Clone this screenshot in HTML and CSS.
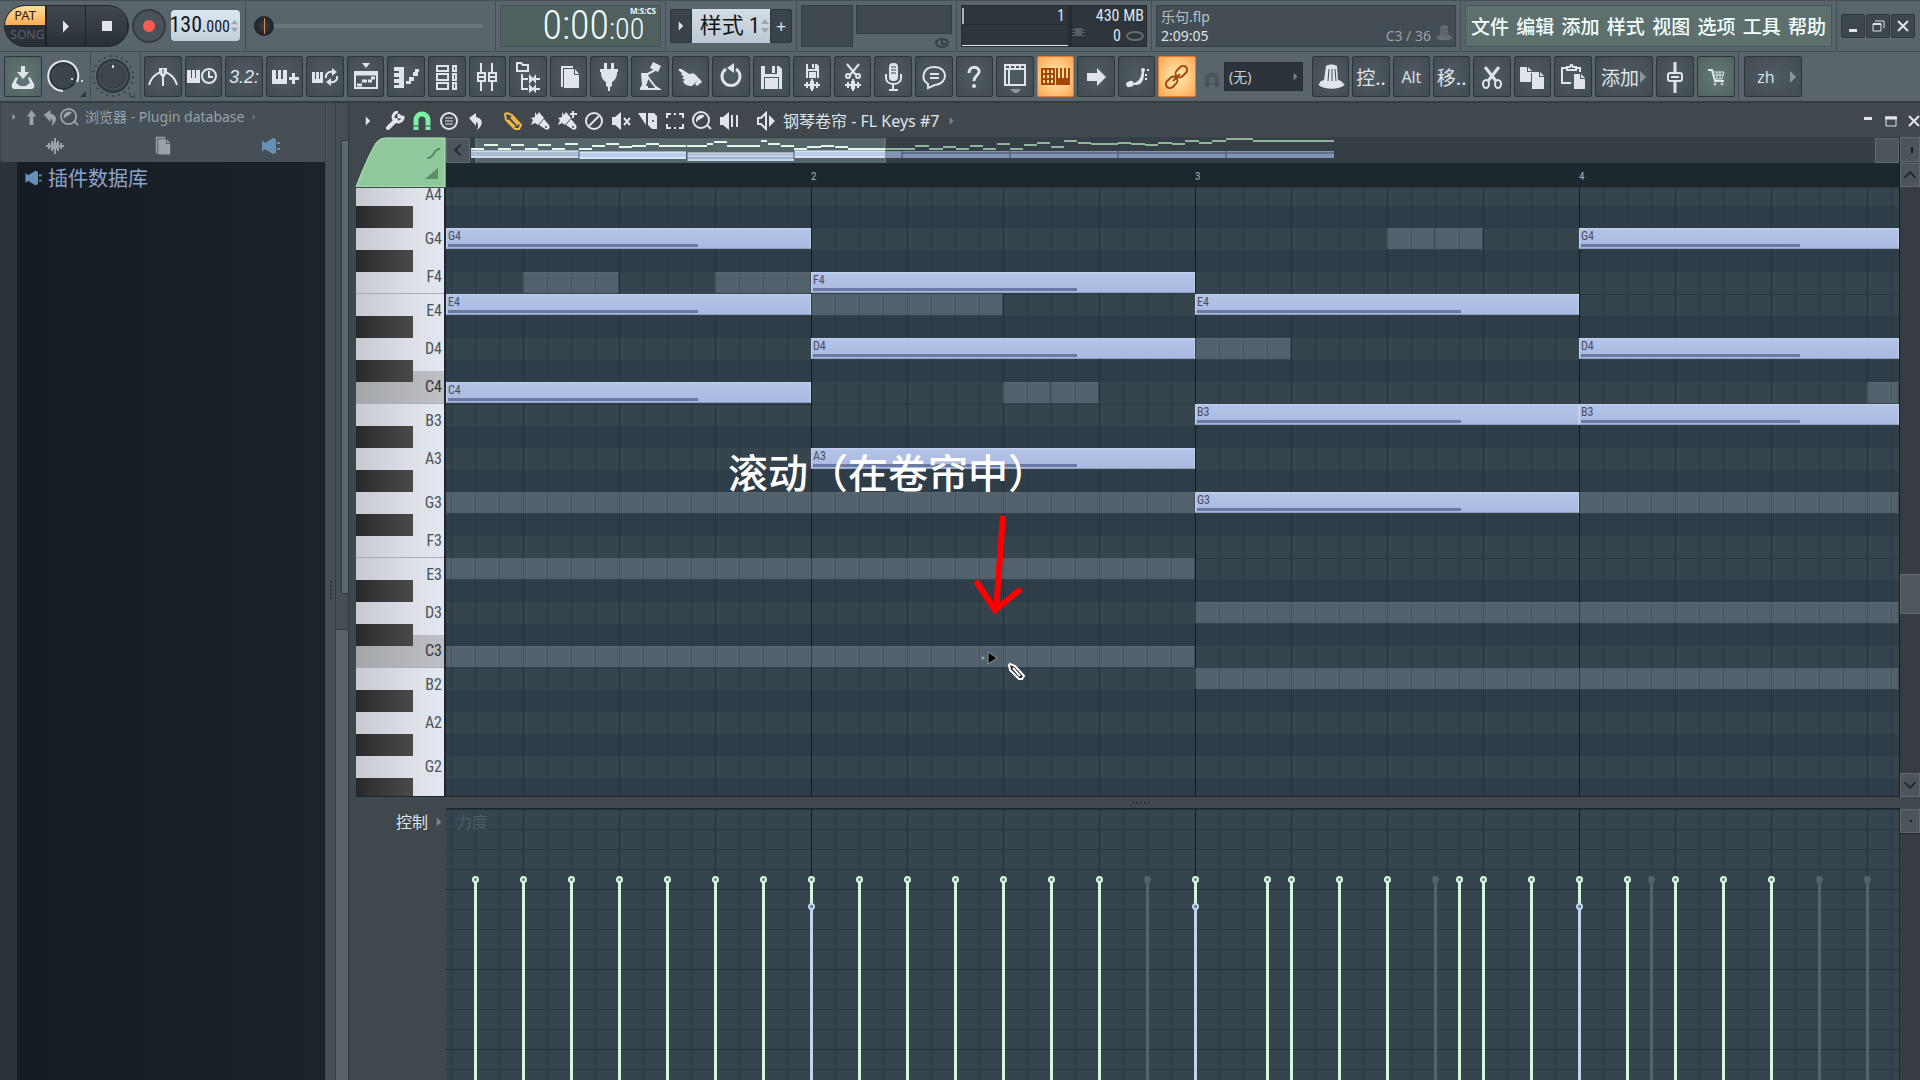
FILE: index.html
```html
<!DOCTYPE html>
<html lang="zh">
<head>
<meta charset="utf-8">
<title>乐句.flp</title>
<link rel="stylesheet" href="styles.css">
</head>
<body>
<svg class="defs" aria-hidden="true">
  <symbol id="tri" viewBox="0 0 8 12"><path d="M1 0l6 6-6 6z" fill="currentColor"/></symbol>
  <symbol id="spin" viewBox="0 0 8 16"><path d="M0 6l4-5 4 5zM0 10l4 5 4-5z" fill="currentColor"/></symbol>
  <symbol id="install" viewBox="0 0 32 32"><path d="M14 5h4v6h4l-6 7-6-7h4z" fill="currentColor"/><path d="M9 16l-4 7c-1 4 1 5 3 5h16c2 0 4-1 3-5l-4-7-2 1 2 5c-2 1-3 2-4 3h-6c-1-1-2-2-4-3l2-5z" fill="currentColor"/></symbol>
  <symbol id="metro" viewBox="0 0 32 32"><path d="M2 24C4 17 8 13 14 11M30 24C28 17 24 13 18 11" fill="none" stroke="currentColor" stroke-width="2"/><path d="M12 7h8v5l-3 4v9h-2v-9l-3-4z" fill="currentColor"/><path d="M16 8v5" stroke="#424b51"/></symbol>
  <symbol id="keysclock" viewBox="0 0 32 32"><path d="M0 9h4v8h1V9h3v8h1V9h4v13H0z" fill="currentColor"/><circle cx="22" cy="15" r="7" fill="none" stroke="currentColor" stroke-width="2"/><path d="M22 10v6h4" fill="none" stroke="currentColor" stroke-width="2"/></symbol>
  <symbol id="keysplus" viewBox="0 0 32 32"><path d="M3 9h4v9h2V9h3v9h2V9h4v14H3zM23 12h3v4h4v3h-4v4h-3v-4h-3v-3h3z" fill="currentColor"/></symbol>
  <symbol id="keysloop" viewBox="0 0 32 32"><path d="M3 11h3v7h1v-7h3v7h1v-7h3v11H3z" fill="currentColor"/><path d="M17 17a5 5 0 0 1 8-5M28 15a5 5 0 0 1-8 5" fill="none" stroke="currentColor" stroke-width="2"/><path d="M23 7l5 4-5 4zM22 17l-5 4 5 4z" fill="currentColor"/></symbol>
  <symbol id="playlist" viewBox="0 0 32 32"><path d="M12 2h8l-4 5z" fill="currentColor"/><path d="M5 11h22v16H5z" fill="none" stroke="currentColor" stroke-width="2"/><path d="M5 13h22M7 24h5M12 20h5M18 20h4M21 17h4" stroke="currentColor" stroke-width="3"/></symbol>
  <symbol id="pianoroll" viewBox="0 0 32 32"><path d="M4 6h10v21H4v-3h5v-2H4v-4h5v-2H4v-4h5v-2H4zM16 20h5v3h-5zM19 16h5v4h-5zM23 11h5v4h-5zM25 8h4v3h-4z" fill="currentColor"/></symbol>
  <symbol id="rack" viewBox="0 0 32 32"><path d="M6 5h11v5H6zM22 5h3v5h-3zM6 13h11v6H6zM22 13h3v6h-3zM6 22h11v6H6zM22 22h3v6h-3z" fill="none" stroke="currentColor" stroke-width="2"/></symbol>
  <symbol id="mixer" viewBox="0 0 32 32"><path d="M10 2v10M10 20v10M21 2v10M21 20v10M7 12h7v8H7zM18 12h7v8h-7zM8 16h5M19 16h5" fill="none" stroke="currentColor" stroke-width="2"/></symbol>
  <symbol id="tree" viewBox="0 0 32 32"><path d="M5 2h4l2 2h5v6H5zM10 13v15h6M10 18h6" fill="none" stroke="currentColor" stroke-width="2"/><path d="M17 13l4 4 3-4v4h4v2h-4v4l-3-4-4 4zM17 23l4 4 3-4v4h4v2h-4v3l-3-3-4 3z" fill="currentColor"/></symbol>
  <symbol id="docs" viewBox="0 0 32 32"><path d="M9 26V6h11" fill="none" stroke="currentColor" stroke-width="2"/><path d="M11 8h10v6h5v13H11zM22 8l4 5h-4z" fill="currentColor"/></symbol>
  <symbol id="plug" viewBox="0 0 32 32"><path d="M11 2h3v6h4V2h3v6h4v3h-1c0 6-2 8-5 10v4l-2 1v4h-2v-4l-2-1v-4c-3-2-5-4-5-10H7V8h4z" fill="currentColor"/></symbol>
  <symbol id="arm" viewBox="0 0 32 32"><path d="M19 1l8 4-3 6-8-4z" fill="currentColor"/><path d="M21 9l-11 6" stroke="currentColor" stroke-width="2"/><path d="M7 12h6l2 4-3 9h2v4H6v-2l2-3z" fill="currentColor"/><path d="M13 15l10 13M10 28h16" stroke="currentColor" stroke-width="2"/><path d="M22 25l6 4h-6z" fill="currentColor"/></symbol>
  <symbol id="hand" viewBox="0 0 32 32"><path d="M5 8c2-2 9 5 11 5 4-2 6 1 9 5l-7 7c-4 0-8-1-9-5l2-1-3-2 2-2-3-1 1-2c-2-1-4-3-3-4z" fill="currentColor"/><path d="M25 17l3 4-5 4-2-2z" fill="currentColor"/></symbol>
  <symbol id="undo-big" viewBox="0 0 32 32"><path d="M11 8a9 9 0 1 0 10 0" fill="none" stroke="currentColor" stroke-width="3"/><path d="M19 2v10l-7-5z" fill="currentColor"/></symbol>
  <symbol id="floppy" viewBox="0 0 32 32"><path d="M6 5h4v8h12V5h2l3 3v20h-3V16H9v12H6zM17 5h3v7h-3zM10 17h13v11H10z" fill="currentColor"/></symbol>
  <symbol id="floppywave" viewBox="0 0 32 32"><path d="M10 3h2v5h7V3h2l2 2v12h-2v-7H12v7h-2zM16 3h2v4h-2zM13 11h7v6h-7zM8 23h2v-2h2v2h2v-3h1v-2h2v2h1v3h2v-2h2v2h2v2h-2v2h-2v-2h-2v3h-1v2h-2v-2h-1v-3h-2v2h-2v-2H8z" fill="currentColor"/></symbol>
  <symbol id="cutwave" viewBox="0 0 32 32"><path d="M10 3l9 11M22 3l-9 11" stroke="currentColor" stroke-width="2"/><circle cx="11" cy="15" r="2" fill="none" stroke="currentColor" stroke-width="2"/><circle cx="21" cy="15" r="2" fill="none" stroke="currentColor" stroke-width="2"/><path d="M8 23h2v-2h2v2h2v-3h1v-2h2v2h1v3h2v-2h2v2h2v2h-2v2h-2v-2h-2v3h-1v2h-2v-2h-1v-3h-2v2h-2v-2H8z" fill="currentColor"/></symbol>
  <symbol id="mic" viewBox="0 0 32 32"><rect x="12" y="2" width="9" height="18" rx="4" fill="currentColor"/><path d="M14 6h5M14 9h5M14 12h5" stroke="#424b51"/><path d="M9 13v4c0 8 15 8 15 0v-4M16 23v6M12 29h9" fill="none" stroke="currentColor" stroke-width="2"/></symbol>
  <symbol id="chat" viewBox="0 0 32 32"><path d="M10 23C2 18 5 6 16 6c15 0 14 17 1 18l-7 3z" fill="none" stroke="currentColor" stroke-width="2"/><path d="M12 13h9M12 17h9" stroke="currentColor" stroke-width="2"/></symbol>
  <symbol id="help" viewBox="0 0 32 32"><path d="M11 12c0-8 11-7 10-1-1 4-5 4-5 9" fill="none" stroke="currentColor" stroke-width="3"/><circle cx="16" cy="25" r="2" fill="currentColor"/></symbol>
  <symbol id="layout" viewBox="0 0 32 32"><path d="M6 4h20v20H6zM6 8h20M10 8v16M11 4v4M16 4v4M21 4v4" fill="none" stroke="currentColor" stroke-width="2"/><path d="M11 28h11l-5 6z" fill="#8d969c"/></symbol>
  <symbol id="stepkeys" viewBox="0 0 32 32"><path d="M3 8h12v15H3zM3 13h12M3 18h12M7 8v15M11 8v15" fill="none" stroke="currentColor" stroke-width="2"/><path d="M17 7h2v10h2V7h2v10h2V7h2v10h2V7h2v17H17z" fill="currentColor"/></symbol>
  <symbol id="arrow" viewBox="0 0 32 32"><path d="M7 12h10V7l9 9-9 9v-5H7z" fill="currentColor"/></symbol>
  <symbol id="slide" viewBox="0 0 32 32"><ellipse cx="9" cy="23" rx="4" ry="3" transform="rotate(-20 9 23)" fill="currentColor"/><path d="M13 22c6-2 7-6 8-13l2 1c0 5 0 9-3 12-2 2-4 2-7 2z" fill="currentColor"/><circle cx="22" cy="9" r="2" fill="currentColor"/><path d="M24 14h2M24 18h2M26 9h2" stroke="currentColor" stroke-width="2"/></symbol>
  <symbol id="link" viewBox="0 0 32 32"><g fill="none" stroke="currentColor" stroke-width="2"><rect x="14" y="7" width="13" height="8" rx="4" transform="rotate(-45 20 11)"/><rect x="4" y="17" width="13" height="8" rx="4" transform="rotate(-45 11 21)"/><path d="M12 20l7-7"/></g></symbol>
  <symbol id="hat" viewBox="0 0 32 32"><path d="M11 5c3-2 8-2 11 0l1 14c5 1 6 4 4 5-5 4-16 4-21 0-3-2-1-4 3-5z" fill="currentColor"/><path d="M14 8l-1 12M17 8v12M20 8l1 12" stroke="#424b51" stroke-width="1"/><path d="M4 23c4 5 20 5 25 0" fill="none" stroke="currentColor" stroke-width="2"/></symbol>
  <symbol id="scissors" viewBox="0 0 32 32"><path d="M9 6l11 14M23 6L12 20" stroke="currentColor" stroke-width="3"/><ellipse cx="10" cy="23" rx="3" ry="4" fill="none" stroke="currentColor" stroke-width="2"/><ellipse cx="22" cy="23" rx="3" ry="4" fill="none" stroke="currentColor" stroke-width="2"/></symbol>
  <symbol id="copy" viewBox="0 0 32 32"><path d="M4 6h7v5h5v1h-1v9H4zM12 6l4 4h-4zM16 11h7v5h5v12H16zM24 11l4 4h-4z" fill="currentColor"/></symbol>
  <symbol id="paste" viewBox="0 0 32 32"><path d="M14 22H5V7h5M18 7h5v4M10 6h3l1-2h1l1 2h3v3h-9z" fill="none" stroke="currentColor" stroke-width="2"/><path d="M17 13h6v5h5v10H17zM24 13l4 4h-4z" fill="currentColor"/></symbol>
  <symbol id="fader" viewBox="0 0 32 32"><path d="M16 1v10M16 21v11" stroke="currentColor" stroke-width="3"/><rect x="9" y="12" width="14" height="8" rx="2" fill="none" stroke="currentColor" stroke-width="2"/><path d="M12 16h8" stroke="currentColor" stroke-width="2"/></symbol>
  <symbol id="cart" viewBox="0 0 32 32"><path d="M8 9h4l3 11h9" fill="none" stroke="currentColor" stroke-width="2"/><path d="M13 11h11l-2 7h-7M14 14h9M17 11v7M20 11v7" fill="none" stroke="currentColor"/><circle cx="15" cy="23" r="1" fill="none" stroke="currentColor" /><circle cx="22" cy="23" r="1" fill="none" stroke="currentColor"/></symbol>
  <symbol id="up" viewBox="0 0 20 20"><path d="M10 2l5 7h-3v9H8V9H5z" fill="currentColor"/></symbol>
  <symbol id="back" viewBox="0 0 20 20"><path d="M3 7l7-5v4c7 1 8 8 1 13 2-5 1-7-1-8v4z" fill="currentColor"/></symbol>
  <symbol id="lens" viewBox="0 0 20 20"><circle cx="9" cy="9" r="8" fill="none" stroke="currentColor" stroke-width="2"/><path d="M5 9c0-3 3-5 6-4-1 2-4 2-6 4zM15 14l4 4" stroke="currentColor" stroke-width="2" fill="currentColor"/></symbol>
  <symbol id="wave" viewBox="0 0 20 20"><path d="M1 9h2V7h2v2h1V5h2v2h1V2h2v5h1V5h2v4h1V7h2v2h2v2h-2v2h-2v-2h-1v4h-2v-2h-1v5H9v-5H8v2H6v-4H5v2H3v-2H1z" fill="currentColor"/></symbol>
  <symbol id="jack" viewBox="0 0 20 20"><path d="M1 5h1l2 2 8-5 3 1v14l-3 1-8-5-2 2H1zM16 6h3v2h-3zM16 12h3v2h-3z" fill="currentColor"/></symbol>
  <symbol id="wrench" viewBox="0 0 20 20"><path d="M3 17l8-8" stroke="currentColor" stroke-width="4" stroke-linecap="round"/><path d="M18 5a5 5 0 1 1-5-4M14 3v3h4" fill="none" stroke="currentColor" stroke-width="3"/></symbol>
  <symbol id="magnet" viewBox="0 0 20 20"><path d="M4 19V9a6 6 0 0 1 12 0v10" fill="none" stroke="currentColor" stroke-width="5"/><path d="M1 15h18" stroke="#40484e" stroke-width="1"/></symbol>
  <symbol id="menu" viewBox="0 0 20 20"><circle cx="10" cy="10" r="8" fill="none" stroke="currentColor" stroke-width="2"/><path d="M6 7h8M6 10h8M6 13h8" stroke="currentColor"/></symbol>
  <symbol id="pencil" viewBox="0 0 20 20"><path d="M2 3l1 6 9 9h4l2-4-9-10-5-2zM8 6l7 8M5 9l7 7" fill="none" stroke="currentColor" stroke-width="2"/></symbol>
  <symbol id="brush" viewBox="0 0 20 20"><path d="M5 1l2 3 2-3 5 6-6 7-3-2-4 2 2-5-2-2 4-1z" fill="currentColor"/><path d="M14 8l5 6c2 4-2 6-4 4l-6-4z" fill="currentColor"/><circle cx="16" cy="16" r="1" fill="#40484e"/></symbol>
  <symbol id="brushplus" viewBox="0 0 20 20"><use href="#brush"/><path d="M16 0v7M13 3h7" stroke="currentColor" stroke-width="2"/></symbol>
  <symbol id="ban" viewBox="0 0 20 20"><circle cx="10" cy="10" r="8" fill="none" stroke="currentColor" stroke-width="2"/><path d="M5 15L15 5" stroke="currentColor" stroke-width="2"/></symbol>
  <symbol id="mute" viewBox="0 0 20 20"><path d="M1 6h3l6-5v18l-6-5H1z" fill="currentColor"/><path d="M13 7l6 7M19 7l-6 7" stroke="currentColor" stroke-width="2"/></symbol>
  <symbol id="slice" viewBox="0 0 20 20"><path d="M0 2h8v12zM10 2h6l3 3v13h-5l-4-4z" fill="currentColor"/><circle cx="15" cy="10" r="1" fill="#40484e"/></symbol>
  <symbol id="marquee" viewBox="0 0 20 20"><path d="M2 7V3h4M14 3h4v4M18 13v4h-4M6 17H2v-4M9 3h2M9 17h2" fill="none" stroke="currentColor" stroke-width="2"/></symbol>
  <symbol id="playback" viewBox="0 0 20 20"><path d="M1 6h3l6-5v18l-6-5H1z" fill="currentColor"/><path d="M13 4v12M18 4v12" stroke="currentColor" stroke-width="2"/></symbol>
  <symbol id="speaker" viewBox="0 0 20 20"><path d="M2 7h3l5-5v16l-5-5H2z" fill="none" stroke="currentColor" stroke-width="2"/><path d="M13 4l6 6-6 6z" fill="currentColor"/></symbol>
  <symbol id="w-min" viewBox="0 0 20 20"><path d="M6 13h8v3H6z" fill="currentColor"/></symbol>
  <symbol id="w-top" viewBox="0 0 20 20"><path d="M6 6h8v3H6z" fill="currentColor"/></symbol>
  <symbol id="w-restore" viewBox="0 0 20 20"><path d="M5 8h8v7H5zM7 5h9v7" fill="none" stroke="currentColor" stroke-width="1"/><path d="M5 8h8" stroke="currentColor" stroke-width="2"/></symbol>
  <symbol id="w-max" viewBox="0 0 20 20"><path d="M5 6h10v9H5z" fill="none" stroke="currentColor" stroke-width="1"/><path d="M4 7h12" stroke="currentColor" stroke-width="3"/></symbol>
  <symbol id="w-close" viewBox="0 0 20 20"><path d="M5 5l10 10M15 5L5 15" stroke="currentColor" stroke-width="2"/></symbol>
  <symbol id="chev" viewBox="0 0 20 20"><path d="M13 4l-6 6 6 6" fill="none" stroke="currentColor" stroke-width="2"/></symbol>
</svg>

<header class="topbar">
  <section class="panel transport">
    <div class="pill">
      <button class="mode"><span class="pat">PAT</span><span class="song">SONG</span></button>
      <button class="pill-btn" aria-label="Play"><svg class="i-play"><use href="#tri"/></svg></button>
      <button class="pill-btn last" aria-label="Stop"><span class="i-stop"></span></button>
    </div>
    <button class="record" aria-label="Record"><span class="dot"></span></button>
    <button class="tempo"><span class="tempo-int">130</span><span class="tempo-frac">.000</span><svg class="spin"><use href="#spin"/></svg></button>
  </section>
  <section class="panel songpos"><input type="range" class="pos" min="0" max="100" value="0" aria-label="Song position"></section>
  <section class="panel">
    <div class="lcd"><span class="lcd-big">0:00</span><span class="lcd-side"><span class="lcd-unit">M:S:CS</span><span class="lcd-small">:00</span></span></div>
  </section>
  <section class="panel pattern">
    <button class="pbtn" aria-label="Pattern menu"><svg class="i-tri"><use href="#tri"/></svg></button>
    <label class="pfield"><input value="样式 1" aria-label="Pattern"><svg class="spin"><use href="#spin"/></svg></label>
    <button class="pbtn plus">+</button>
  </section>
  <section class="panel meters">
    <div class="scope"></div>
    <div class="wavebox"><div class="peak"></div><svg class="knoblet" viewBox="0 0 14 12"><ellipse cx="7" cy="6" rx="6" ry="4" fill="none" stroke="currentColor" stroke-width="2"/><path d="M7 1v6h4" fill="none" stroke="currentColor" stroke-width="2"/></svg></div>
  </section>
  <section class="panel">
    <div class="cpu">
      <div class="cpu-l"><span class="bar"></span><span>1</span></div>
      <div class="cpu-r"><span>430 MB</span><span class="voices"><svg class="chip" viewBox="0 0 13 10"><path d="M3 1h7v8H3zM0 2h13v1H0zM0 5h13v1H0zM0 8h13v1H0z" fill="currentColor"/></svg>0 <svg class="lips" viewBox="0 0 18 10"><ellipse cx="9" cy="5" rx="8" ry="4" fill="none" stroke="currentColor" stroke-width="2"/></svg></span></div>
    </div>
  </section>
  <section class="panel grow">
    <div class="hint">
      <span class="hint-file">乐句.flp</span>
      <span class="hint-row"><span class="hint-time">2:09:05</span><span class="hint-note">C3 / 36</span></span>
      <svg class="hint-hat"><use href="#hat"/></svg>
    </div>
  </section>
  <section class="panel">
    <nav class="menu"><a href="#">文件</a><a href="#">编辑</a><a href="#">添加</a><a href="#">样式</a><a href="#">视图</a><a href="#">选项</a><a href="#">工具</a><a href="#">帮助</a></nav>
  </section>
  <section class="panel win">
    <button aria-label="Minimize"><svg><use href="#w-min"/></svg></button>
    <button aria-label="Restore"><svg><use href="#w-restore"/></svg></button>
    <button aria-label="Close"><svg><use href="#w-close"/></svg></button>
  </section>
</header>

<div class="toolbar">
  <div class="seg first">
    <button class="tool green" aria-label="Install"><svg><use href="#install"/></svg></button>
    <svg class="knob" viewBox="0 0 44 44"><circle cx="21" cy="21" r="13" fill="#3c454b" stroke="#2c343a" stroke-width="2"/><path d="M21 36a15 15 0 1 1 14-9" fill="none" stroke="#dfe5e9" stroke-width="2"/><path d="M29 23h2v2h-2zM39 25h2v2h-2z" fill="#cdd4d9"/><path d="M44 36v6h-6z" fill="#2f373d"/></svg>
  </div>
  <div class="seg second">
    <svg class="knob" viewBox="0 0 44 44"><circle cx="22" cy="21" r="20" fill="none" stroke="#3b444a" stroke-width="2" stroke-dasharray="2 4"/><circle cx="22" cy="21" r="16" fill="#434c52" stroke="#2f373d" stroke-width="2"/><circle cx="22" cy="21" r="12" fill="#3d464c" stroke="#353d43"/><path d="M21 10h2v3h-2z" fill="#cdd4d9"/><path d="M39 38v4h5v-4" stroke="#2f373d" fill="none"/></svg>
  </div>
  <div class="tools main-tools">
    <button class="tool" aria-label="Metronome"><svg><use href="#metro"/></svg></button>
    <button class="tool" aria-label="Wait for input"><svg><use href="#keysclock"/></svg></button>
    <button class="tool count">3.2:</button>
    <button class="tool" aria-label="Step edit"><svg><use href="#keysplus"/></svg></button>
    <button class="tool" aria-label="Loop record"><svg><use href="#keysloop"/></svg></button>
    <button class="tool" aria-label="Playlist"><svg><use href="#playlist"/></svg></button>
    <button class="tool" aria-label="Piano roll"><svg><use href="#pianoroll"/></svg></button>
    <button class="tool" aria-label="Channel rack"><svg><use href="#rack"/></svg></button>
    <button class="tool" aria-label="Mixer"><svg><use href="#mixer"/></svg></button>
    <button class="tool" aria-label="Browser"><svg><use href="#tree"/></svg></button>
    <button class="tool" aria-label="Project"><svg><use href="#docs"/></svg></button>
    <button class="tool" aria-label="Plugins"><svg><use href="#plug"/></svg></button>
    <button class="tool" aria-label="Tempo tapper"><svg><use href="#arm"/></svg></button>
    <button class="tool" aria-label="Touch"><svg><use href="#hand"/></svg></button>
    <button class="tool" aria-label="Undo"><svg><use href="#undo-big"/></svg></button>
    <button class="tool" aria-label="Save"><svg><use href="#floppy"/></svg></button>
    <button class="tool" aria-label="Render"><svg><use href="#floppywave"/></svg></button>
    <button class="tool" aria-label="Edit audio"><svg><use href="#cutwave"/></svg></button>
    <button class="tool" aria-label="Record audio"><svg><use href="#mic"/></svg></button>
    <button class="tool" aria-label="Chat"><svg><use href="#chat"/></svg></button>
    <button class="tool" aria-label="Help"><svg><use href="#help"/></svg></button>
    <button class="tool" aria-label="Layout"><svg class="tall"><use href="#layout"/></svg></button>
    <button class="tool lit" aria-label="Typing keyboard"><svg><use href="#stepkeys"/></svg></button>
    <button class="tool" aria-label="Auto scroll"><svg><use href="#arrow"/></svg></button>
    <button class="tool" aria-label="Slide"><svg><use href="#slide"/></svg></button>
    <button class="tool lit" aria-label="Multilink"><svg><use href="#link"/></svg></button>
  </div>
  <svg class="snap-icon"><use href="#magnet"/></svg>
  <div class="snap"><select aria-label="Snap"><option>(无)</option></select><svg class="i-tri"><use href="#tri"/></svg></div>
  <div class="tools edit-tools">
    <button class="tool" aria-label="Wizard"><svg><use href="#hat"/></svg></button>
    <button class="tool txt">控..</button>
    <button class="tool alt">Alt</button>
    <button class="tool txt">移..</button>
    <button class="tool" aria-label="Cut"><svg><use href="#scissors"/></svg></button>
    <button class="tool" aria-label="Copy"><svg><use href="#copy"/></svg></button>
  </div>
  <div class="tools end-tools">
    <button class="tool w38" aria-label="Paste"><svg><use href="#paste"/></svg></button>
    <button class="tool txt w57">添加<svg class="i-tri"><use href="#tri"/></svg></button>
    <button class="tool w38" aria-label="Fader"><svg><use href="#fader"/></svg></button>
    <button class="tool green w38" aria-label="Shop"><svg><use href="#cart"/></svg></button>
  </div>
  <div class="seg lang"><button class="tool alt w57">zh<svg class="i-tri"><use href="#tri"/></svg></button></div>
</div>

<div class="work">
  <aside class="browser">
    <div class="b-head">
      <div class="b-title"><svg class="i-tri"><use href="#tri"/></svg><svg class="ic"><use href="#up"/></svg><svg class="ic"><use href="#back"/></svg><svg class="ic"><use href="#lens"/></svg><span>浏览器 - Plugin database</span><svg class="i-tri faint"><use href="#tri"/></svg></div>
      <div class="b-tabs">
        <button aria-label="Audio"><svg><use href="#wave"/></svg></button>
        <button aria-label="Files"><svg viewBox="6 4 22 25"><use href="#docs" width="32" height="32"/></svg></button>
        <button class="on" aria-label="Plugins"><svg><use href="#jack"/></svg></button>
      </div>
    </div>
    <div class="b-list"><a href="#" class="b-item"><svg><use href="#jack"/></svg>插件数据库</a></div>
  </aside>
  <div class="splitter"><span class="grip"></span></div>
  <div class="vscroll"><div class="vs-top"><div class="vs-thumb"></div></div><div class="vs-low"></div></div>

  <main class="roll">
    <div class="r-title">
      <button class="rb" aria-label="Menu"><svg class="i-tri"><use href="#tri"/></svg></button>
      <button class="rb" aria-label="Tools"><svg><use href="#wrench"/></svg></button>
      <button class="rb mint" aria-label="Snap"><svg><use href="#magnet"/></svg></button>
      <button class="rb" aria-label="Stamp"><svg><use href="#menu"/></svg></button>
      <button class="rb" aria-label="Back"><svg><use href="#back"/></svg></button>
      <button class="rb amber sep" aria-label="Draw"><svg><use href="#pencil"/></svg></button>
      <button class="rb" aria-label="Paint"><svg><use href="#brush"/></svg></button>
      <button class="rb" aria-label="Paint sequence"><svg><use href="#brushplus"/></svg></button>
      <button class="rb" aria-label="Delete"><svg><use href="#ban"/></svg></button>
      <button class="rb" aria-label="Mute"><svg><use href="#mute"/></svg></button>
      <button class="rb" aria-label="Slice"><svg><use href="#slice"/></svg></button>
      <button class="rb" aria-label="Select"><svg><use href="#marquee"/></svg></button>
      <button class="rb" aria-label="Zoom"><svg><use href="#lens"/></svg></button>
      <button class="rb" aria-label="Playback"><svg><use href="#playback"/></svg></button>
      <button class="rb sep" aria-label="Channel"><svg><use href="#speaker"/></svg></button>
      <span class="r-name">钢琴卷帘 - FL Keys #7</span><svg class="i-tri faint"><use href="#tri"/></svg>
      <div class="r-win">
        <button class="rb" aria-label="Minimize"><svg><use href="#w-top"/></svg></button>
        <button class="rb" aria-label="Maximize"><svg><use href="#w-max"/></svg></button>
        <button class="rb" aria-label="Close"><svg><use href="#w-close"/></svg></button>
      </div>
    </div>

    <div class="corner">
      <svg viewBox="0 0 90 50"><path d="M0 50C6 34 14 16 20 6Q24 1 29 1H89V50z" fill="#90c79b" stroke="#b9e8c2"/><path d="M71 21c8 1 6-10 13-9" fill="none" stroke="#5c8a68" stroke-width="2"/><path d="M82 31v11H69z" fill="#5f8d6b"/></svg>
    </div>
    <div class="overview">
      <button class="sq" aria-label="Scroll left"><svg><use href="#chev"/></svg></button>
      <div class="o-map">
        <svg class="map" viewBox="470 137 864 26" width="864" height="26">
          <rect x="476" y="138" width="409" height="25" fill="#56666a"/>
          <path d="M885 138v25M476 138v25" stroke="#7b8a8f"/>
          <path d="M471 151h108v7H471z" fill="#a9bcd4"/><path d="M579 152h107v7H579zM794 151h91v7h-91z" fill="#b9cdec"/><path d="M687 153h107v8H687z" fill="#9eb2cf"/>
          <path d="M471 151h108M471 157h108M579 152h107M579 158h107M687 153h107M687 156h107M687 160h107M794 151h91M794 157h91" stroke="#f1f7ff" stroke-width="1"/>
          <path d="M579 151v8M687 152v9M794 150v9" stroke="#4a5866"/>
          <path d="M885 151h449v7H885z" fill="#8593b3"/><path d="M902 153h432" stroke="#3e4a66"/><path d="M902 151v7M1010 151v7M1118 151v7M1226 151v7" stroke="#3e4a66"/>
          <path d="M471 149h13M484 145h14M498 149h13M511 145h13M525 149h13M538 145h13M552 149h13M565 144h13M579 149h13M592 146h13M606 144h13M619 147h13M632 146h14M646 144h13M659 146h27M687 146h20M707 144h6M714 142h13M727 146h33M761 141h6M768 144h12M781 146h13M794 149h13M807 147h14M821 146h13M835 147h13M848 149h37" stroke="#e0f8e4" stroke-width="2"/>
          <path d="M885 149h30M915 146h14M929 149h14M943 147h13M956 149h13M970 146h13M983 149h13M997 144h13M1010 149h13M1024 145h13M1037 143h13M1051 147h13M1064 141h13M1078 143h13M1091 144h27M1118 143h13M1131 144h14M1145 145h13M1158 143h14M1172 144h13M1185 141h14M1199 143h13M1212 141h14M1226 139h27M1253 141h81" stroke="#8fb59a" stroke-width="2"/>
        </svg>
      </div>
      <button class="sq right" aria-label="Scroll right"></button>
    </div>
    <button class="sq side" aria-label="Zoom handle"><span class="tick"></span></button>
    <div class="ruler"><span style="left:365px">2</span><span style="left:749px">3</span><span style="left:1133px">4</span></div>

    <div class="keys">
      <div class="key k-g">A4</div><div class="key k-g bk">G4</div><div class="key bk ln">F4</div><div class="key">E4</div>
      <div class="key k-g bk d">D4</div><div class="key bk ln c">C4</div><div class="key">B3</div><div class="key k-g bk">A3</div>
      <div class="key k-g bk">G3</div><div class="key bk ln">F3</div><div class="key">E3</div><div class="key k-g bk">D3</div>
      <div class="key bk ln c">C3</div><div class="key">B2</div><div class="key k-g bk">A2</div><div class="key k-g bk">G2</div><div class="key bk"></div>
    </div>

    <div class="grid">
      <div class="lane cut"></div>
      <div class="lane dk"></div>
      <div class="lane"><b class="note" style="left:0;width:365px">G4</b><i class="ghost" style="left:941px;width:48px"></i><i class="ghost" style="left:989px;width:48px"></i><b class="note" style="left:1133px;width:320px">G4</b></div>
      <div class="lane dk"></div>
      <div class="lane"><i class="ghost" style="left:77px;width:96px"></i><i class="ghost" style="left:269px;width:96px"></i><b class="note" style="left:365px;width:384px">F4</b></div>
      <div class="lane ln"><b class="note" style="left:0;width:365px">E4</b><i class="ghost" style="left:365px;width:192px"></i><b class="note" style="left:749px;width:384px">E4</b></div>
      <div class="lane dk"></div>
      <div class="lane"><b class="note" style="left:365px;width:384px">D4</b><i class="ghost" style="left:749px;width:96px"></i><b class="note" style="left:1133px;width:320px">D4</b></div>
      <div class="lane dk"></div>
      <div class="lane"><b class="note" style="left:0;width:365px">C4</b><i class="ghost" style="left:557px;width:48px"></i><i class="ghost" style="left:605px;width:48px"></i><i class="ghost" style="left:1421px;width:32px"></i></div>
      <div class="lane ln"><b class="note" style="left:749px;width:384px">B3</b><b class="note" style="left:1133px;width:320px">B3</b></div>
      <div class="lane dk"></div>
      <div class="lane"><b class="note" style="left:365px;width:384px">A3</b></div>
      <div class="lane dk"></div>
      <div class="lane"><i class="ghost" style="left:0;width:749px"></i><b class="note" style="left:749px;width:384px">G3</b><i class="ghost" style="left:1133px;width:320px"></i></div>
      <div class="lane dk"></div>
      <div class="lane"></div>
      <div class="lane ln"><i class="ghost" style="left:0;width:749px"></i></div>
      <div class="lane dk"></div>
      <div class="lane"><i class="ghost" style="left:749px;width:704px"></i></div>
      <div class="lane dk"></div>
      <div class="lane"><i class="ghost" style="left:0;width:749px"></i></div>
      <div class="lane ln"><i class="ghost" style="left:749px;width:704px"></i></div>
      <div class="lane dk"></div>
      <div class="lane"></div>
      <div class="lane dk"></div>
      <div class="lane"></div>
      <div class="lane dk cut"></div>
      <p class="caption">滚动（在卷帘中）</p>
      <svg class="pointer" viewBox="0 0 60 110"><path d="M36 5l-7 95M9 70l19 29 26-21" fill="none" stroke="#f00" stroke-width="6"/></svg>
      <svg class="cursor" viewBox="0 0 46 30"><circle cx="4" cy="7" r="1" fill="#111" stroke="#c8d0d5"/><path d="M9 1l9 6-9 6z" fill="#000" stroke="#8c999f"/><path d="M30 14l1 5 9 9h3l2-3-9-10-5-2zM34 17l7 8" fill="#222" stroke="#fff" stroke-width="2"/></svg>
    </div>
    <div class="rscroll">
      <button class="sq" aria-label="Scroll up"><svg class="r90"><use href="#chev"/></svg></button>
      <div class="track"><div class="thumb"></div></div>
      <button class="sq" aria-label="Scroll down"><svg class="r270"><use href="#chev"/></svg></button>
    </div>

    <div class="gap"><span class="grip flat"></span></div>
    <div class="ctl"><button>控制<svg class="i-tri"><use href="#tri"/></svg></button></div>
    <div class="velo">
      <span class="v-name">力度</span>
      <i class="stem" style="left:29px"></i><i class="stem" style="left:77px"></i><i class="stem" style="left:125px"></i><i class="stem" style="left:173px"></i><i class="stem" style="left:221px"></i><i class="stem" style="left:269px"></i><i class="stem" style="left:317px"></i><i class="stem" style="left:365px"></i><i class="stem blue" style="left:365px"></i><i class="stem" style="left:413px"></i><i class="stem" style="left:461px"></i><i class="stem" style="left:509px"></i><i class="stem" style="left:557px"></i><i class="stem" style="left:605px"></i><i class="stem" style="left:653px"></i><i class="stem off" style="left:701px"></i><i class="stem" style="left:749px"></i><i class="stem blue" style="left:749px"></i><i class="stem" style="left:821px"></i><i class="stem" style="left:845px"></i><i class="stem" style="left:893px"></i><i class="stem" style="left:941px"></i><i class="stem off" style="left:989px"></i><i class="stem" style="left:1013px"></i><i class="stem" style="left:1037px"></i><i class="stem" style="left:1085px"></i><i class="stem" style="left:1133px"></i><i class="stem blue" style="left:1133px"></i><i class="stem" style="left:1181px"></i><i class="stem off" style="left:1205px"></i><i class="stem" style="left:1229px"></i><i class="stem" style="left:1277px"></i><i class="stem" style="left:1325px"></i><i class="stem off" style="left:1373px"></i><i class="stem off" style="left:1421px"></i>
    </div>
    <div class="rscroll low"><button class="sq" aria-label="Zoom velocity"><span class="pt"></span></button><div class="track"></div></div>
  </main>
</div>
</body>
</html>
```
FILE: styles.css
```css
*, *::before, *::after { box-sizing: border-box; }
html, body { margin: 0; height: 100%; }
body {
  display: flex; flex-direction: column; min-height: 100vh; overflow: hidden;
  background: #40484e; color: #dfe5ea;
  font: 16px/20px "Noto Sans", "Noto Sans CJK SC", sans-serif;
}
button, input, select { font: inherit; color: inherit; border: 0; background: none; padding: 0; margin: 0; }
a { color: inherit; text-decoration: none; }
svg { display: block; flex: none; }
.defs { position: absolute; width: 0; height: 0; }
.i-tri { width: 8px; height: 12px; }
.spin { width: 8px; height: 16px; color: #9aa5ad; }

.topbar { display: flex; flex: none; height: 52px; background: #5a646b; border-top: 1px solid #464f56; border-bottom: 1px solid #464f56; }
.panel { display: flex; align-items: flex-start; padding: 4px 4px 0; border-right: 1px solid #464f56; }
.panel.grow { flex: 1; }
.transport { width: 246px; gap: 2px; }
.pill { display: flex; width: 125px; height: 42px; border-radius: 21px; overflow: hidden; background: #2a3136; border: 1px solid #23292e; }
.mode { width: 42px; display: flex; flex-direction: column; font-size: 13px; border-right: 2px solid #1e2429; }
.pat { height: 19px; line-height: 19px; color: #2e2010; background: linear-gradient(#ffe09a, #ffab55); text-align: right; padding-right: 9px; }
.song { height: 21px; line-height: 20px; font-size: 12px; color: #596168; padding-left: 5px; }
.pill-btn { width: 39px; display: flex; align-items: center; justify-content: center; background: linear-gradient(#41494f, #293035); border-right: 1px solid #1e2429; }
.pill-btn.last { flex: 1; }
.i-play { width: 8px; height: 13px; }
.i-stop { width: 10px; height: 10px; background: #dfe5ea; }
.record { flex: none; width: 34px; height: 34px; margin: 4px 0 0 1px; border-radius: 50%; background: #4a5359; border: 2px solid #353d43; display: flex; align-items: center; justify-content: center; }
.dot { width: 12px; height: 12px; border-radius: 50%; background: #ff5a52; }
.tempo { flex: none; width: 69px; height: 31px; margin: 5px 0 0 3px; padding: 0 2px; border-radius: 4px; background: linear-gradient(#dce7ef, #c2cfd9); color: #15191c; display: flex; align-items: baseline; justify-content: flex-end; font-family: "Roboto Condensed", "Roboto", sans-serif; line-height: 30px; }
.tempo-int { font-size: 22px; } .tempo-frac { font-size: 16px; }
.tempo .spin { margin-left: 1px; width: 7px; align-self: center; }
.songpos { width: 250px; align-items: center; padding: 0 12px 0 8px; }
.pos { appearance: none; width: 100%; height: 24px; }
.pos::-webkit-slider-runnable-track { height: 4px; background: #6b757c; border-radius: 2px; }
.pos::-webkit-slider-thumb { appearance: none; width: 20px; height: 20px; margin-top: -8px; border-radius: 50%; background: linear-gradient(90deg, transparent 8px, #e08a4a 8px, #e08a4a 9px, transparent 9px), radial-gradient(#3c4348, #14181b); border: 2px solid #22282c; }
.lcd { width: 161px; height: 42px; background: #50605f; border: 1px solid #465256; display: flex; justify-content: flex-end; padding-right: 4px; color: #eefcfb; font-family: "Roboto Condensed", "Roboto", sans-serif; }
.lcd-big { font-size: 40px; line-height: 40px; font-weight: 300; }
.lcd-side { display: flex; flex-direction: column; width: 47px; font-weight: 300; }
.lcd-unit { font: bold 8px/10px "Noto Sans", sans-serif; text-align: right; }
.lcd-small { font-size: 30px; line-height: 26px; }
.pattern { padding-top: 8px; width: 131px; }
.pbtn { width: 22px; height: 34px; background: #3a4349; border: 1px solid #2f373d; display: flex; align-items: center; justify-content: center; border-radius: 2px; }
.pbtn .i-tri { width: 6px; height: 10px; }
.plus { font-size: 18px; }
.pfield { display: flex; align-items: center; width: 79px; height: 34px; background: linear-gradient(#d3dde5, #bdc9d2); color: #12161a; }
.pfield input { width: 69px; padding-left: 8px; font: 22px/30px "Roboto Condensed", "Roboto", "Noto Sans CJK SC", sans-serif; height: 30px; }
.meters { gap: 3px; width: 160px; }
.scope { width: 52px; height: 42px; background: #3f484f; border: 1px solid #353d44; }
.wavebox { width: 96px; display: flex; flex-direction: column; align-items: flex-end; gap: 3px; }
.peak { width: 96px; height: 29px; background: #3f484f; border: 1px solid #353d44; }
.knoblet { width: 14px; height: 12px; margin-right: 3px; color: #3a4248; }
.cpu { width: 186px; height: 42px; display: flex; background: #2e363c; border: 1px solid #252c31; font: 16px/20px "Roboto Condensed", "Roboto", sans-serif; }
.cpu-l { width: 106px; display: flex; justify-content: space-between; align-items: flex-start; padding-right: 3px; border-bottom: 1px solid #dfe5ea; background: linear-gradient(#2e363c 18px, #252c31 18px, #252c31 19px, #2e363c 19px); }
.bar { width: 2px; height: 16px; margin-top: 2px; background: #aab3b9; }
.cpu-r { flex: 1; padding-right: 2px; display: flex; flex-direction: column; align-items: flex-end; border-left: 4px solid #262d32; }
.voices { display: flex; align-items: center; gap: 5px; width: 100%; justify-content: flex-end; }
.chip { width: 13px; height: 10px; margin: 0 auto 8px 0; color: #566067; }
.lips { width: 18px; height: 10px; color: #646d73; }
.hint { position: relative; flex: 1; height: 42px; background: #444d53; border: 1px solid #384047; padding: 1px 4px; font-size: 14px; line-height: 20px; display: flex; flex-direction: column; }
.hint-file { line-height: 20px; height: 20px; color: #b9c1c7; }
.hint-row { display: flex; justify-content: space-between; height: 18px; line-height: 18px; }
.hint-note { padding-right: 20px; color: #98a1a7; }
.hint-hat { position: absolute; right: 1px; bottom: 2px; width: 20px; height: 22px; color: #666f75; }
.menu { display: flex; justify-content: space-between; align-items: center; width: 367px; height: 42px; padding: 0 5px; background: #5d706e; border: 1px solid #48555a; color: #f2fffd; font: 500 19px/28px "Noto Sans CJK SC", sans-serif; }
.win { gap: 1px; padding-top: 13px; border-right: 0; width: 83px; }
.win button { width: 24px; height: 24px; background: #3d464c; border: 1px solid #2f373d; border-radius: 2px; display: flex; align-items: center; justify-content: center; }
.win svg { width: 20px; height: 20px; }

.toolbar { display: flex; flex: none; height: 51px; background: #5a646b; border-bottom: 2px solid #353d43; align-items: center; }
.seg { display: flex; height: 50px; align-items: center; border-right: 1px solid #464f56; }
.first { width: 91px; padding-left: 4px; }
.second { width: 50px; }
.knob { width: 44px; height: 44px; }
.tools { display: grid; gap: 3px; height: 41px; }
.main-tools { grid-template-columns: repeat(26, 1fr); width: 1052px; margin-left: 3px; }
.edit-tools { grid-template-columns: repeat(6, 1fr); width: 239px; margin-left: 9px; }
.end-tools { display: flex; margin: 0 3px; }
.tool { height: 41px; background: radial-gradient(#515b62, #424b51); border: 1px solid #2e363c; border-radius: 2px; display: flex; align-items: center; justify-content: center; overflow: hidden; white-space: nowrap; }
.tool > svg { width: 32px; height: 32px; }
.tool > svg.tall { overflow: visible; }
.tool > svg.i-tri { width: 8px; height: 12px; color: #8d969c; }
.first .tool, .w38 { width: 38px; }
.w57 { width: 58px; }
.green { background: radial-gradient(#647a77, #50625f); }
.lit { background: radial-gradient(#fff0b4, #ffa552); border-color: #e8792a; color: #a2480a; }
.count { font: italic 18px/20px "Liberation Sans", sans-serif; }
.txt { font: 19px/24px "Noto Sans CJK SC", sans-serif; }
.alt { font: 16px/20px "Open Sans", "Noto Sans", sans-serif; }
.snap-icon { width: 16px; height: 16px; margin: 6px 4px 0 8px; color: #4b545a; }
.snap { position: relative; display: flex; align-items: center; width: 79px; height: 29px; background: #2d333b; border: 1px solid #262c32; }
.snap select { appearance: none; width: 100%; padding-left: 4px; font-size: 14px; color: #c9d0d6; }
.snap .i-tri { position: absolute; right: 4px; width: 5px; height: 9px; color: #7d868c; }
.lang { padding-left: 5px; border: 0; border-left: 1px solid #464f56; }
.lang .tool { gap: 14px; padding-left: 8px; }

.work { flex: 1; display: grid; grid-template-columns: 326px 10px 13px 1fr; min-height: 0; }
.browser { display: flex; flex-direction: column; border-right: 1px solid #3b444a; }
.b-head { height: 59px; background: #464f55; border-left: 1px solid #3b444a; color: #99a2a8; }
.b-title { display: flex; align-items: center; height: 28px; padding-left: 11px; font-size: 14px; line-height: 20px; }
.b-title .i-tri { width: 4px; height: 8px; }
.b-title .faint { color: #6a737a; margin-left: 8px; }
.ic { width: 19px; height: 19px; }
.b-title .i-tri + .ic { margin-left: 6px; }
.b-title span { margin-left: 6px; }
.b-tabs { display: grid; grid-template-columns: 1fr 1fr 1fr; height: 29px; }
.b-tabs button { display: flex; align-items: center; justify-content: center; }
.b-tabs svg { width: 20px; height: 20px; }
.b-tabs .on, .b-item svg { color: #6690b8; }
.b-list { flex: 1; border-left: 17px solid #2b333a; background: linear-gradient(90deg, #151c23, #1b242a); padding-left: 7px; }
.b-item { display: flex; align-items: center; gap: 5px; height: 32px; font: 20px/30px "Noto Sans CJK SC", sans-serif; color: #8ea3cc; }
.b-item svg { width: 19px; height: 18px; }
.splitter { background: #464f55; border-right: 1px solid #353d43; display: flex; justify-content: center; padding-top: 478px; }
.grip { width: 2px; height: 19px; background: repeating-linear-gradient(#2d353a 0 2px, transparent 2px 4px); }
.vscroll { display: flex; flex-direction: column; background: #454e54; border-right: 1px solid #2f373c; }
.vs-top { height: 527px; border-bottom: 1px solid #353d43; padding: 37px 0 0 5px; }
.vs-thumb { height: 454px; background: #5d676e; border: 1px solid #353d43; border-right: 0; }
.vs-low { flex: 1; background: #5a626a; }

.roll { display: grid; grid-template-columns: 90px 1fr 20px; grid-template-rows: 34px 26px 25px auto 11px 1fr; padding-left: 7px; min-width: 0; }
.r-title { grid-column: 1 / -1; display: flex; align-items: center; gap: 7px; padding: 2px 0 0 2px; }
.rb { width: 20px; height: 20px; display: flex; align-items: center; justify-content: center; }
.rb svg { width: 20px; height: 20px; }
.rb .i-tri { width: 6px; height: 12px; }
.mint { color: #7cf0a4; } .amber { color: #f0b545; }
.sep { margin-left: 10px; }
.r-name { white-space: nowrap; }
.r-title > .faint { color: #7d868c; width: 5px; height: 10px; margin-left: 3px; }
.r-win { margin-left: auto; display: flex; gap: 3px; margin-right: -4px; }
.corner { grid-row: 2 / 4; }
.corner svg { width: 90px; height: 50px; }
.overview { display: flex; background: #363f46; min-width: 0; align-items: center; border-right: 1px solid #1d272d; }
.sq { width: 24px; height: 25px; flex: none; background: #4c555b; border: 1px solid #5f696f; display: flex; align-items: center; justify-content: center; color: #20282d; }
.sq svg { width: 18px; height: 18px; }
.sq.side { width: 20px; justify-content: flex-end; padding-right: 6px; }
.tick { width: 2px; height: 6px; background: #151b1f; }
.pt { width: 2px; height: 2px; background: #151b1f; }
.o-map { flex: 1; min-width: 0; overflow: hidden; }
.ruler { position: relative; background: #1c282e; border-bottom: 1px solid #2c3a42; border-right: 1px solid #141d22; }
.ruler span { position: absolute; top: 6px; font: 11px/16px "Roboto Condensed", "Roboto", sans-serif; color: #a6b0b6; }
.rscroll { grid-column: 3; grid-row: 3 / 5; display: flex; flex-direction: column; align-items: center; }
.rscroll .sq { width: 20px; height: 24px; justify-content: flex-end; }
.rscroll.low { grid-row: 6; padding-top: 1px; }
.rscroll.low .sq { padding-right: 7px; }
.track { flex: 1; width: 20px; background: #363c42; padding-top: 387px; }
.low .track { padding: 0; border-top: 1px solid #20282d; }
.thumb { height: 40px; background: #50585f; border: 1px solid #606a70; border-right: 0; }
.r90 { transform: rotate(90deg); } .r270 { transform: rotate(270deg); }

.keys { grid-column: 1; grid-row: 4; height: 609px; overflow: hidden; display: flex; flex-direction: column; border-bottom: 1px solid #20282d; border-right: 2px solid #20282d; }
.key { position: relative; flex: none; height: 33px; display: flex; align-items: center; justify-content: flex-end; padding-right: 2px; background: linear-gradient(90deg, #c6cad0, #dcdfe5 60%, #e3e7f0); color: #4d5358; font: 16px/20px "Roboto Condensed", "Roboto", sans-serif; }
.key.k-g { height: 44px; }
.key:first-child { margin-top: -15px; }
.key.ln { border-bottom: 1px solid #a9aeb6; }
.key.c { background: linear-gradient(90deg, #a3a6a8, #bfc1c5); color: #33383c; }
.bk::before { content: ""; position: absolute; left: 0; top: -11px; width: 57px; height: 22px; z-index: 1; background: linear-gradient(90deg, #26292c, #3a3b3c 50%, #4a4a4b); }

.grid { grid-column: 2; grid-row: 4; position: relative; min-width: 0; overflow: hidden; border-right: 1px solid #141d22; border-bottom: 1px solid #20282d; }
.lane { --bg: #36444e; position: relative; height: 22px; background:
  linear-gradient(90deg, #101a20 1px, transparent 1px) 365px 0 / 384px 100%,
  linear-gradient(90deg, #22313a 1px, transparent 1px) 77px 0 / 96px 100%,
  linear-gradient(90deg, #2a3842 1px, transparent 1px) 5px 0 / 24px 100%,
  var(--bg); }
.lane.dk { --bg: #2f3d48; }
.lane.ln { --bg: linear-gradient(#2b3943 1px, #36444e 1px); }
.lane.cut { height: 18px; }
.note, .ghost { position: absolute; top: 0; height: 21px; }
.note { border: 1px solid #c3d0ee; border-bottom-color: #8e9cc0; background: linear-gradient(#b4c4e8, #a9b9e0); color: #494f62; font: 12px/14px "Roboto Condensed", "Roboto", sans-serif; padding-left: 1px; }
.note::after { content: ""; position: absolute; left: 1px; bottom: 1px; width: 69%; height: 3px; background: #6b7aa2; }
.ghost { background: rgba(200, 215, 228, .2); border-top: 1px solid rgba(255, 255, 255, .04); border-right: 1px solid rgba(20, 30, 36, .3); }
.caption { position: absolute; left: 282px; top: 254px; margin: 0; font: 500 40px/58px "Noto Sans CJK SC", sans-serif; color: #fff; white-space: nowrap; }
.pointer { position: absolute; left: 521px; top: 323px; width: 60px; height: 110px; }
.cursor { position: absolute; left: 533px; top: 463px; width: 46px; height: 30px; }

.gap { grid-column: 2 / -1; grid-row: 5; display: flex; justify-content: center; align-items: center; }
.grip.flat { width: 19px; height: 2px; margin-right: 84px; background: repeating-linear-gradient(90deg, #2d353a 0 2px, transparent 2px 4px); }
.ctl { grid-column: 1; grid-row: 6; display: flex; justify-content: flex-end; align-items: flex-start; padding: 4px 4px 0 0; }
.ctl button { display: flex; align-items: center; gap: 8px; }
.ctl .i-tri { width: 6px; height: 10px; color: #7d868c; }
.velo { grid-column: 2; grid-row: 6; position: relative; min-width: 0; overflow: hidden; border: 1px solid #20282d; border-width: 1px 1px 0 0; background:
  linear-gradient(90deg, #101a20 1px, transparent 1px) 365px 0 / 384px 100%,
  linear-gradient(90deg, #22313a 1px, transparent 1px) 77px 0 / 96px 100%,
  linear-gradient(90deg, #2a3842 1px, transparent 1px) 5px 0 / 24px 100%,
  linear-gradient(#202e37 1px, transparent 1px) 0 0 / 100% 80px,
  linear-gradient(#2b3943 1px, transparent 1px) 0 0 / 100% 20px,
  #36444e; }
.v-name { position: absolute; left: 10px; top: 3px; color: #4d5b64; }
.stem { --c: #d3f7dc; --f: #5c8a6c; position: absolute; top: 70px; bottom: 0; width: 3px; margin-left: -1px; background: var(--c); }
.stem::before { content: ""; position: absolute; left: -2px; top: -3px; width: 7px; height: 7px; border-radius: 50%; border: 2px solid var(--c); background: var(--f); }
.blue { --c: #c3d2ee; --f: #5d6f92; top: 97px; }
.off { --c: #55636c; --f: #55636c; }
```
